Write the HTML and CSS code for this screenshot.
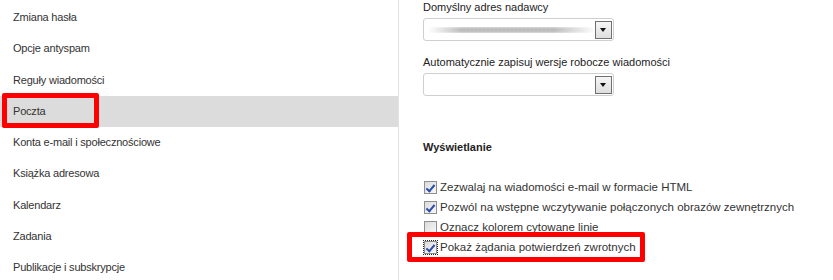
FILE: index.html
```html
<!DOCTYPE html>
<html lang="pl">

<head>
    <meta charset="UTF-8">
    <meta name="viewport" content="width=device-width, initial-scale=1.0">
    <title>Opcje</title>

    <link rel="stylesheet" href="styles.css">
</head>

<body>
    <div class="page">
        <!-- lewe menu ustawień -->
        <ul class="menu">
            <li>Zmiana hasła</li>
            <li>Opcje antyspam</li>
            <li>Reguły wiadomości</li>
            <li class="active">Poczta<span class="mark"></span></li>
            <li>Konta e-mail i społecznościowe</li>
            <li>Książka adresowa</li>
            <li>Kalendarz</li>
            <li>Zadania</li>
            <li>Publikacje i subskrypcje</li>
        </ul>

        <div class="content">
            <p class="label">Domyślny adres nadawcy</p>
            <div class="select">
                <span class="blur"></span>
                <i class="arrow"></i>
            </div>

            <p class="label">Automatycznie zapisuj wersje robocze wiadomości</p>
            <div class="select">
                <i class="arrow"></i>
            </div>

            <h4 class="title">Wyświetlanie</h4>

            <div class="checks">
                <label class="check"><i class="box on"></i>Zezwalaj na wiadomości e-mail w formacie HTML</label>
                <label class="check"><i class="box on"></i>Pozwól na wstępne wczytywanie połączonych obrazów zewnętrznych</label>
                <label class="check"><i class="box"></i>Oznacz kolorem cytowane linie</label>
                <label class="check"><i class="box on focus"></i>Pokaż żądania potwierdzeń zwrotnych<span class="mark"></span></label>
            </div>
        </div>
    </div>
</body>

</html>
```

FILE: styles.css
```css
* {
    margin: 0;
    padding: 0;
    box-sizing: border-box;
}

body {
    font-family: "Liberation Sans", Arial, sans-serif;
    color: #333;
    background: #fff;
}

.page {
    display: flex;
    width: 833px;
    height: 280px;
    overflow: hidden;
}

/* menu po lewej */
.menu {
    list-style: none;
    width: 399px;
    border-right: 1px solid #e2e2e2;
    padding-top: 2px;
}

.menu li {
    position: relative;
    height: 31.3px;
    line-height: 31px;
    padding-left: 13px;
    font-size: 11px;
    letter-spacing: -0.2px;
    color: #333;
}

.menu li.active {
    background: #dcdcdc;
}

/* czerwona ramka */
.mark {
    position: absolute;
    border: 5px solid #f00;
    border-radius: 2px;
}

.menu li .mark {
    left: 2px;
    top: -3px;
    width: 97px;
    height: 35px;
}

.content {
    padding-left: 24px;
}

.label {
    font-size: 11px;
    line-height: 14px;
    color: #222;
}

.select {
    position: relative;
    width: 191px;
    height: 23px;
    margin-top: 4px;
    margin-bottom: 14px;
    border: 1px solid #cfcfcf;
    border-radius: 3px;
    background: #fff;
}

.select .blur {
    position: absolute;
    left: 4px;
    top: 8px;
    width: 168px;
    height: 6px;
    background: repeating-linear-gradient(to right, #b0b0b0 0, #c8c8c8 2px, #b4b4b4 4px);
    -webkit-mask-image: linear-gradient(to right, transparent, #000 20%, #000 75%, transparent);
    mask-image: linear-gradient(to right, transparent, #000 20%, #000 75%, transparent);
    filter: blur(0.8px);
}

.select .arrow {
    position: absolute;
    right: 1px;
    top: 2px;
    width: 17px;
    height: 18px;
    border: 1px solid #707070;
    background: linear-gradient(#f6f6f6, #dedede);
}

.select .arrow::after {
    content: "";
    position: absolute;
    left: 4px;
    top: 6px;
    border-left: 3.5px solid transparent;
    border-right: 3.5px solid transparent;
    border-top: 4px solid #111;
}

.title {
    font-size: 11px;
    line-height: 13px;
    font-weight: bold;
    color: #222;
    margin-top: 45px;
}

.checks {
    margin-top: 23px;
}

.check {
    position: relative;
    display: flex;
    align-items: center;
    height: 20px;
    font-size: 11.5px;
    color: #333;
}

.box {
    width: 13px;
    height: 13px;
    margin-left: 1px;
    margin-right: 3px;
    border: 1px solid #8f8f8f;
    background: linear-gradient(135deg, #dcdcdc, #f7f7f7);
    position: relative;
}

.box.on::after {
    content: "";
    position: absolute;
    left: 3px;
    top: 1px;
    width: 3px;
    height: 7px;
    border-right: 2px solid #2a4ea8;
    border-bottom: 2px solid #2a4ea8;
    transform: rotate(40deg);
}

.box.focus {
    outline: 1px dotted #222;
}

.check .mark {
    left: -16px;
    top: -5px;
    width: 238px;
    height: 30px;
}
```
